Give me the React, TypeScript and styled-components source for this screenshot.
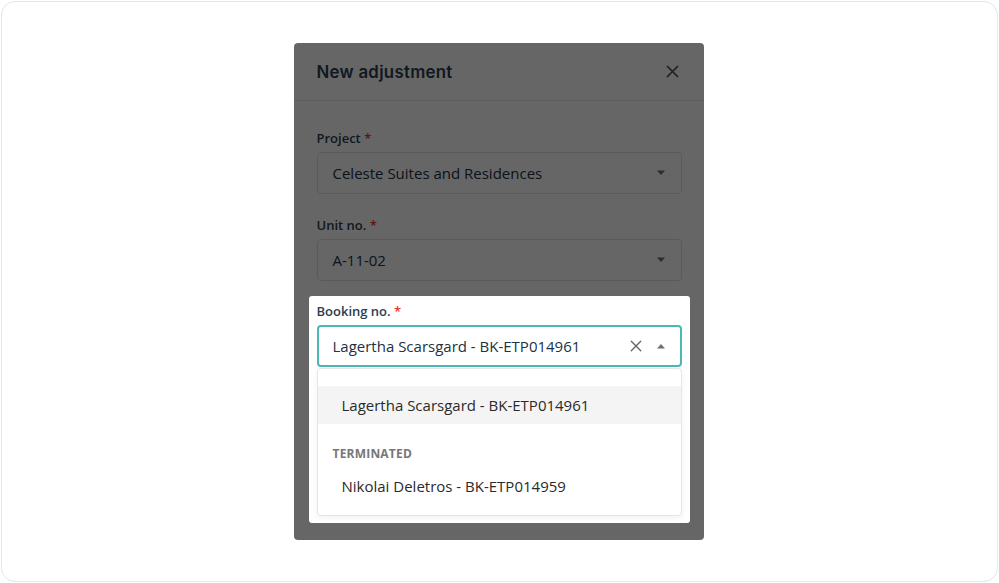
import styled, { createGlobalStyle } from 'styled-components'

/**
 * Global
 */
const GlobalStyle = createGlobalStyle`
  html, body {
    margin: 0;
    padding: 0;
    background: #ffffff;
  }
  * {
    box-sizing: border-box;
  }
  body {
    font-family: 'Open Sans', 'Noto Sans', sans-serif;
  }
`

/**
 * Icons
 */
const CloseIcon = ({ size = 13, color = '#4b5563' }: { size?: number; color?: string }) => (
  <svg width={size} height={size} viewBox='0 0 14 14' fill='none'>
    <path d='M1.5 1.5 L12.5 12.5 M12.5 1.5 L1.5 12.5' stroke={color} strokeWidth='1.6' strokeLinecap='round' />
  </svg>
)

const Caret = ({ up = false }: { up?: boolean }) => (
  <svg width='10' height='6' viewBox='0 0 10 6'>
    <path d={up ? 'M1 5.5 L5 1 L9 5.5 Z' : 'M1 0.5 L5 5 L9 0.5 Z'} fill='#6f6f6f' />
  </svg>
)

/**
 * Component
 */
const App = () => {
  return (
    <>
      <GlobalStyle />
      <Page>
        <Frame>
          <Modal>
            <Header>
              <Title>New adjustment</Title>
              <CloseButton><CloseIcon /></CloseButton>
            </Header>

            <Body>
              <Field>
                <Label>Project <Required>*</Required></Label>
                <SelectBox>
                  <Value>Celeste Suites and Residences</Value>
                  <Controls><Caret /></Controls>
                </SelectBox>
              </Field>

              <Field>
                <Label>Unit no. <Required>*</Required></Label>
                <SelectBox>
                  <Value>A-11-02</Value>
                  <Controls><Caret /></Controls>
                </SelectBox>
              </Field>

              <Spotlight>
                <Label>Booking no. <Required>*</Required></Label>
                <SelectBox $focused>
                  <Value>Lagertha Scarsgard - BK-ETP014961</Value>
                  <Controls>
                    <CloseIcon size={12} color='#666' />
                    <Caret up />
                  </Controls>
                </SelectBox>
                <Menu>
                  <Option $active>Lagertha Scarsgard - BK-ETP014961</Option>
                  <GroupHeader>Terminated</GroupHeader>
                  <Option>Nikolai Deletros - BK-ETP014959</Option>
                </Menu>
              </Spotlight>
            </Body>
          </Modal>
        </Frame>
      </Page>
    </>
  )
}

/**
 * Styled Component
 */
const Page = styled.div`
  width: 999px;
  height: 583px;
  padding: 1px;
  background: #ffffff;
`

const Frame = styled.div`
  width: 100%;
  height: 100%;
  border: 1.5px solid #e3e6ea;
  border-radius: 14px;
  display: flex;
  justify-content: center;
  align-items: flex-start;
  padding: 41px 2px 0 0;
`

const Modal = styled.div`
  width: 410px;
  background: #ffffff;
  border-radius: 4px;
  overflow: hidden;
  display: flex;
  flex-direction: column;
`

const Header = styled.div`
  height: 58px;
  padding: 0 23px;
  display: flex;
  align-items: center;
  justify-content: space-between;
  border-bottom: 1px solid #e8eaed;
`

const Title = styled.h2`
  margin: 0;
  font-family: 'Inter', 'Noto Sans', sans-serif;
  font-size: 16.8px;
  font-weight: 600;
  letter-spacing: 0.3px;
  color: #2c3e52;
`

const CloseButton = styled.button`
  border: none;
  background: none;
  padding: 0;
  margin-right: 2px;
  display: flex;
  align-items: center;
  cursor: pointer;
`

const Body = styled.div`
  padding: 28px 22px 17px 23px;
  display: flex;
  flex-direction: column;
  gap: 22px;
`

const Field = styled.div`
  display: flex;
  flex-direction: column;
`

const Spotlight = styled.div`
  margin: -7px -8px 0;
  padding: 6px 8px 7px;
  background: #ffffff;
  border-radius: 3px;
  display: flex;
  flex-direction: column;
  box-shadow: 0 0 0 1200px rgba(0, 0, 0, 0.6);
  position: relative;
`

const Label = styled.label`
  font-size: 13px;
  line-height: 18px;
  font-weight: 600;
  color: #2b3d52;
  margin-bottom: 5px;
`

const Required = styled.span`
  color: #e53935;
`

const SelectBox = styled.div<{ $focused?: boolean }>`
  height: 42px;
  border: ${({ $focused }) => ($focused ? '2px solid #4cb8b3' : '1px solid #dfe2e6')};
  border-radius: 4px;
  background: #ffffff;
  display: flex;
  align-items: center;
  padding: ${({ $focused }) => ($focused ? '0 14px 0 14px' : '0 15px 0 15px')};
`

const Value = styled.span`
  flex: 1;
  font-size: 15px;
  color: #213244;
  white-space: nowrap;
`

const Controls = styled.div`
  display: flex;
  align-items: center;
  gap: 14px;
`

const Menu = styled.div`
  margin-top: 1px;
  border: 1px solid #e6e6e6;
  border-radius: 4px;
  background: #ffffff;
  padding: 17px 0 10px;
  box-shadow: 0 2px 6px rgba(0, 0, 0, 0.06);
  display: flex;
  flex-direction: column;
`

const Option = styled.div<{ $active?: boolean }>`
  height: 38px;
  padding: 0 24px;
  display: flex;
  align-items: center;
  font-size: 15px;
  color: #2a2a2a;
  background: ${({ $active }) => ($active ? '#f4f4f4' : 'transparent')};
`

const GroupHeader = styled.div`
  padding: 21px 15px 4px;
  font-size: 12px;
  line-height: 18px;
  font-weight: 700;
  letter-spacing: 0.2px;
  text-transform: uppercase;
  color: #777777;
`

export default App
